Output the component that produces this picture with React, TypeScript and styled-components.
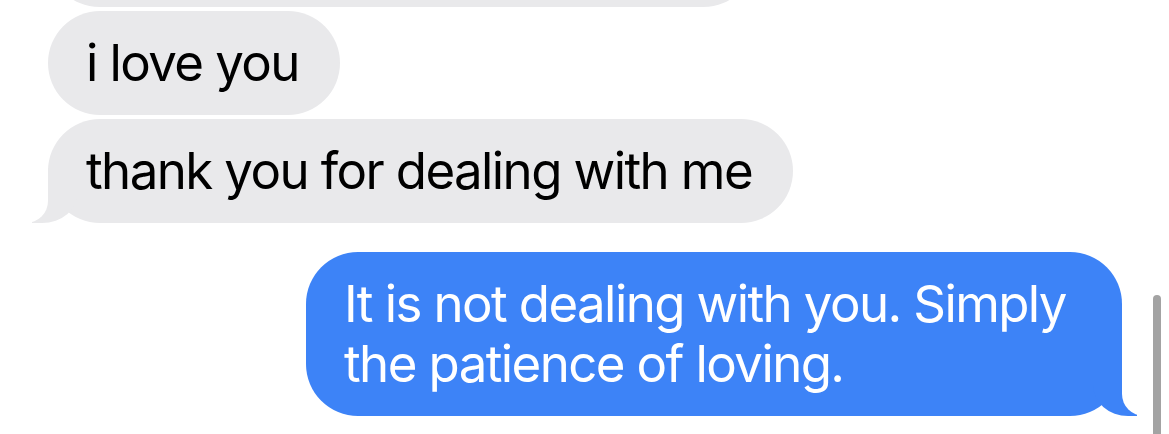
import styled, { createGlobalStyle, css } from 'styled-components'

const GlobalStyle = createGlobalStyle`
  html, body {
    margin: 0;
    padding: 0;
    background: #ffffff;
  }
`

type Side = 'them' | 'me'

type Message = {
  id: number
  side: Side
  text: string
  tail: boolean
}

const messages: Message[] = [
  { id: 1, side: 'them', text: 'i love you', tail: false },
  { id: 2, side: 'them', text: 'thank you for dealing with me', tail: true },
  {
    id: 3,
    side: 'me',
    text: 'It is not dealing with you. Simply the patience of loving.',
    tail: true,
  },
]

const App: React.FC = () => {
  return (
    <>
      <GlobalStyle />
      <Screen>
        <Thread>
          {/* previous message, scrolled almost out of view */}
          <Row side="them" spaced={false}>
            <CutBubble side="them" tail={false} aria-hidden />
          </Row>
          {messages.map((m, i) => {
            const next = messages[i + 1]
            const groupEnd = next && next.side !== m.side
            return (
              <Row key={m.id} side={m.side} spaced={!!groupEnd}>
                <Bubble side={m.side} tail={m.tail}>
                  {m.text}
                </Bubble>
              </Row>
            )
          })}
        </Thread>
        <ScrollThumb />
      </Screen>
    </>
  )
}

const Screen = styled.div`
  position: relative;
  width: 1169px;
  height: 434px;
  overflow: hidden;
  background: #ffffff;
`

const Thread = styled.div`
  display: flex;
  flex-direction: column;
  gap: 4px;
  padding: 0 47px 0 48px;
  margin-top: -96px;
`

type RowProps = {
  side: Side
  spaced: boolean
}

const Row = styled.div<RowProps>`
  display: flex;
  justify-content: ${(p) => (p.side === 'me' ? 'flex-end' : 'flex-start')};
  margin-bottom: ${(p) => (p.spaced ? '25px' : '0')};
`

type BubbleProps = {
  side: Side
  tail: boolean
}

const themTail = css`
  &::before,
  &::after {
    content: '';
    position: absolute;
    bottom: 0;
    height: 55px;
  }
  &::before {
    left: -16px;
    width: 46px;
    background: #e9e9eb;
    border-bottom-right-radius: 36px 31px;
  }
  &::after {
    left: -60px;
    width: 60px;
    background: #ffffff;
    border-bottom-right-radius: 22px;
  }
`

const meTail = css`
  &::before,
  &::after {
    content: '';
    position: absolute;
    bottom: 0;
    height: 55px;
  }
  &::before {
    right: -15px;
    width: 44px;
    background: #3d83f7;
    border-bottom-left-radius: 35px 31px;
  }
  &::after {
    right: -60px;
    width: 60px;
    background: #ffffff;
    border-bottom-left-radius: 22px;
  }
`

const Bubble = styled.div<BubbleProps>`
  position: relative;
  box-sizing: border-box;
  max-width: 816px;
  min-height: 104px;
  padding: 22px 41px 22px 38px;
  border-radius: 52px;
  font-family: Inter, 'Noto Sans', sans-serif;
  font-size: 51px;
  line-height: 60px;
  letter-spacing: -1.6px;
  background: ${(p) => (p.side === 'me' ? '#3d83f7' : '#e9e9eb')};
  color: ${(p) => (p.side === 'me' ? '#ffffff' : '#000000')};
  ${(p) => (p.tail ? (p.side === 'me' ? meTail : themTail) : '')}
`

const CutBubble = styled(Bubble)`
  width: 707px;
  height: 103px;
  min-height: 0;
`

const ScrollThumb = styled.div`
  position: absolute;
  top: 295px;
  right: 8px;
  width: 8px;
  height: 200px;
  border-radius: 4px;
  background: #a3a3a3;
`

export default App
